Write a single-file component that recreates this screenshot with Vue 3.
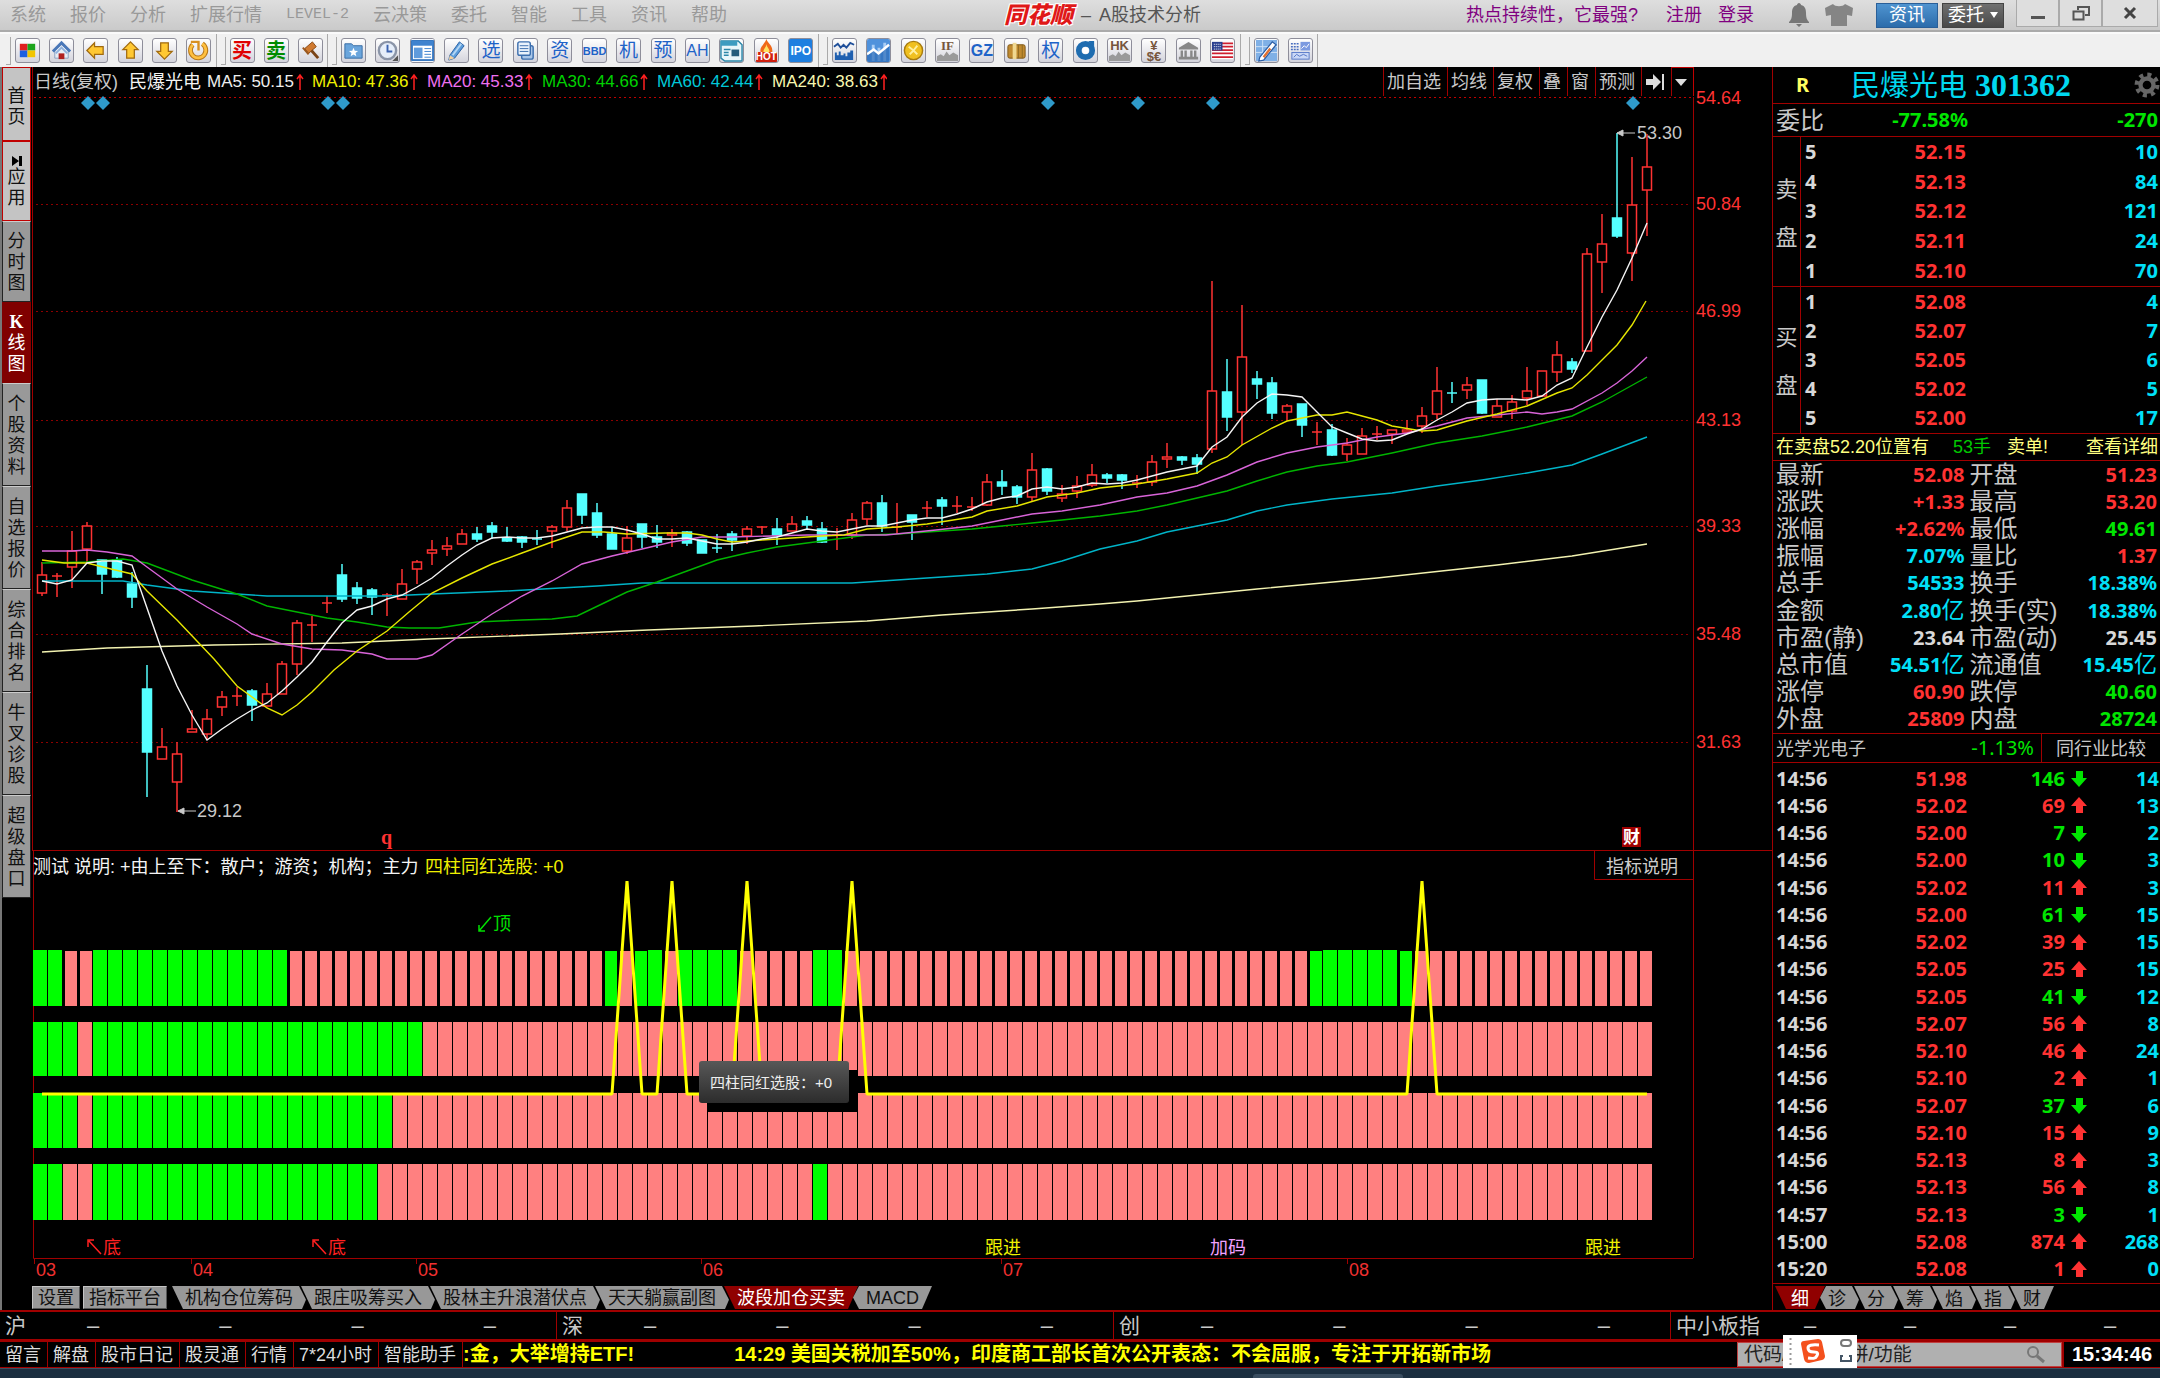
<script setup>
const menus = ['系统', '报价', '分析', '扩展行情', 'LEVEL-2', '云决策', '委托', '智能', '工具', '资讯', '帮助']

const art = {
  grid: '<rect x="4" y="5" width="8" height="7" fill="#e02020"/><rect x="12" y="5" width="8" height="7" fill="#1ca51c"/><rect x="4" y="12" width="8" height="7" fill="#1c5fe0"/><rect x="12" y="12" width="8" height="7" fill="#f2c500"/>',
  home: '<path d="M5 12v8h14v-8l-7-6z" fill="#e8edf5" stroke="#8aa0c0"/><path d="M3 13l9-9 9 9" fill="none" stroke="#4a78b8" stroke-width="3"/><path d="M6 15l6-6 6 6" fill="none" stroke="#8fb2dd" stroke-width="2"/><rect x="9" y="15" width="6" height="6" fill="#b02020"/>',
  left: '<path d="M3 12l8-8v4h9v8h-9v4z" fill="#ffc832" stroke="#a06a10" stroke-width="1.3"/>',
  up: '<path d="M12 3l8 8h-4v9H8v-9H4z" fill="#ffc832" stroke="#a06a10" stroke-width="1.3"/>',
  down: '<path d="M12 21l8-8h-4V4H8v9H4z" fill="#ffc832" stroke="#a06a10" stroke-width="1.3"/>',
  refresh: '<path d="M6 6a8 8 0 1 0 10-1" fill="none" stroke="#b87818" stroke-width="5"/><path d="M6 6a8 8 0 1 0 10-1" fill="none" stroke="#ffc040" stroke-width="3"/><path d="M4 3h8v9" fill="none" stroke="#d89020" stroke-width="2.500"/>',
  gavel: '<path d="M6 10l8-7 4 5-8 7z" fill="#d07a30" stroke="#8a4a15"/><path d="M13 12l7 8" stroke="#7a4418" stroke-width="3"/><path d="M4 9l6 7" stroke="#9a5820" stroke-width="2"/>',
  folder: '<path d="M3 5h7l2 2h9v13H3z" fill="#6aa5dc" stroke="#3a6ea5"/><path d="M12 9l1.3 3.2 3.5.2-2.700 2.200.9 3.400-3-1.900-3 1.900.9-3.400-2.700-2.200 3.500-.2z" fill="#fff"/>',
  clock: '<circle cx="12" cy="12" r="9" fill="#e6eefa" stroke="#8b95a8" stroke-width="2.500"/><path d="M12 6v7h5" fill="none" stroke="#3b62b0" stroke-width="2"/><path d="M17 23l6-6v6z" fill="#555"/>',
  news: '<rect width="24" height="24" fill="#fff"/><rect x="1" y="2" width="22" height="20" fill="#fff" stroke="#3878c0" stroke-width="2"/><rect x="1" y="2" width="22" height="5" fill="#3f83cf"/><rect x="3" y="9" width="9" height="11" fill="#5f9bdc"/><path d="M14 10h7M14 13h7M14 16h7M14 19h7" stroke="#3f83cf"/>',
  pencil: '<path d="M5 17L15 3l5 4L10 20l-6 2z" fill="#5c9ddb" stroke="#2b62a5"/><path d="M8 17L17 5" stroke="#b4d6f4" stroke-width="2"/><path d="M5 17l5 3-6 2z" fill="#f2d0a0"/>',
  pages: '<rect x="8" y="7" width="12" height="14" rx="2" fill="#a9c6e8" stroke="#3c6fae" stroke-width="1.500"/><rect x="4" y="3" width="13" height="14" rx="2" fill="#e9f2fc" stroke="#3c6fae" stroke-width="1.500"/><path d="M6 7h9M6 10h9M6 13h9" stroke="#3c6fae"/>',
  paper: '<path d="M1 2h18l4 4v17H5l-4-3z" fill="#e8f6fa" stroke="#2a86a8" stroke-width="1.500"/><path d="M1 2h17v5H1z" fill="#3d9cc0"/><path d="M4 11h7M4 14h5M4 17h5" stroke="#2a86a8" stroke-width="1.500"/><rect x="12" y="11" width="8" height="7" fill="#245d7c"/>',
  hot: '<path d="M12 0c1 5 7 6 6 14H6C4 8 10 6 12 0z" fill="#f06818"/><path d="M12 5c0 4 4 5 3 10H9c-1-5 3-6 3-10z" fill="#ffe060"/>',
  wave: '<path d="M1 8l4-3 3 4 3-3 3 3 4-5 4 2" fill="none" stroke="#1f4f9a" stroke-width="2"/><path d="M2 22v-8h2v3h2v-4h2v4h3v-2h2v3h2v-4h3v-2h3v10z" fill="#1f5fb0"/>',
  area: '<rect width="24" height="24" fill="#4f92dc"/><path d="M5 6h3v17H5zM11 9h3v14h-3zM17 4h3v19h-3z" fill="#a9cdf4"/><path d="M0 16l7-5 5 4L23 6v18H0z" fill="#2c6cb8" opacity=".7"/><path d="M0 16l7-5 5 4L23 6" fill="none" stroke="#fff" stroke-width="2.500"/>',
  coin: '<circle cx="12" cy="12" r="9.500" fill="#f0c020" stroke="#a87c10" stroke-width="1.500"/><path d="M7 8l5 4 4-5M12 12l4 4M8 16l4-4" stroke="#fff0a0" stroke-width="2" fill="none"/>',
  hill: '<path d="M1 23v-5l4-2 3 2 3-5 3 4 4-3 5 3v6z" fill="#9a9a9a"/>',
  chest: '<rect x="3" y="6" width="18" height="14" rx="2" fill="#c08a30" stroke="#7e5818"/><rect x="8" y="4" width="4" height="17" fill="#f0d890"/><path d="M14 6v14M18 6v14" stroke="#8e6820"/>',
  disc: '<circle cx="12" cy="12" r="7" fill="none" stroke="#1e6cb0" stroke-width="6"/><circle cx="12" cy="12" r="3.500" fill="#fff"/><path d="M15 2h6v6z" fill="#1e6cb0"/>',
  bank: '<path d="M2 9l10-6 10 6v2H2z" fill="#888"/><path d="M5 12v7M9 12v7M15 12v7M19 12v7" stroke="#888" stroke-width="2.500"/><path d="M2 20h20" stroke="#888" stroke-width="3"/>',
  flag: '<rect x="1" y="3" width="22" height="18" fill="#fff"/><path d="M1 4.500h22M1 8h22M1 11.500h22M1 15h22M1 19h22" stroke="#d02030" stroke-width="1.800"/><rect x="1" y="3" width="11" height="9" fill="#2a3f8f"/><path d="M3 5.500h8M3 8h8M3 10.500h8" stroke="#fff" stroke-dasharray="1 1"/>',
  draw: '<rect x="1" y="1" width="22" height="22" fill="#7fb0e6"/><path d="M1 14h22M1 8h22M8 1v22" stroke="#cfe2f8"/><path d="M5 19L18 3l4 3L9 22l-5 1z" fill="#fff" stroke="#2c5ea5" stroke-width="1.300"/><path d="M9 19l7-9" stroke="#e07030" stroke-width="2.500"/>',
  panel: '<path d="M2 5h8M2 8h8M2 11h8" stroke="#4a6fc0" stroke-dasharray="2 1" stroke-width="1.500"/><rect x="12" y="3" width="10" height="9" fill="#7c9ae0"/><path d="M13 10l3-3 2 2 3-4" stroke="#fff" fill="none"/><rect x="3" y="14" width="18" height="7" fill="#cbd8f6" stroke="#5577c8"/><path d="M5 19l3-3 3 2 4-2 4 2" stroke="#5577c8" fill="none"/>'
}
const toolGroups = [
  { n: 'g6', items: [{ a: 'grid' }, { a: 'home' }, { a: 'left' }, { a: 'up' }, { a: 'down' }, { a: 'refresh' }] },
  { n: 'g3', items: [{ t: '买', c: 'red' }, { t: '卖', c: 'green' }, { a: 'gavel' }] },
  { n: 'g14', items: [{ a: 'folder' }, { a: 'clock' }, { a: 'news' }, { a: 'pencil' }, { t: '选', c: 'blue' }, { a: 'pages' }, { t: '资', c: 'blue' }, { t: 'BBD', c: 'blue tiny' }, { t: '机', c: 'blue' }, { t: '预', c: 'blue' }, { t: 'AH', c: 'blue small' }, { a: 'paper' }, { a: 'hot', t: 'HOT', c: 'hot' }, { t: 'IPO', c: 'ipo' }] },
  { n: 'g12', items: [{ a: 'wave' }, { a: 'area' }, { a: 'coin' }, { a: 'hill', t: 'IF', c: 'over serif' }, { t: 'GZ', c: 'blue bold' }, { a: 'chest' }, { t: '权', c: 'blue' }, { a: 'disc' }, { a: 'hill', t: 'HK', c: 'over' }, { t: '¥ $€', c: 'money' }, { a: 'bank' }, { a: 'flag' }] },
  { n: 'g2', items: [{ a: 'draw' }, { a: 'panel' }] }
]

const sideTabs = [
  { t: '首页', c: 'light s1' }, { t: '应用', c: 'light s2', arrow: true }, { t: '分时图', c: 's3' },
  { t: 'K线图', c: 's3 active' }, { t: '个股资料', c: 's4' }, { t: '自选报价', c: 's4' },
  { t: '综合排名', c: 's4' }, { t: '牛叉诊股', c: 's4' }, { t: '超级盘口', c: 's4' }
]

const averages = [
  { t: 'MA5: 50.15', c: 'w' }, { t: 'MA10: 47.36', c: 'y' }, { t: 'MA20: 45.33', c: 'm' },
  { t: 'MA30: 44.66', c: 'g' }, { t: 'MA60: 42.44', c: 'b' }, { t: 'MA240: 38.63', c: 'k' }
]
const chartButtons = ['加自选', '均线', '复权', '叠', '窗', '预测']

const step = 15
const cx = (i) => 42 + i * step

// high, body top, body bottom, low; the last field is 1 for a rising day
const raw = `562,575,593,596,1 573,576,576,597,1 531,551,567,588,1 522,526,549,562,1 560,560,574,594,0 557,560,577,578,0 572,584,597,608,0 665,689,752,797,0 728,747,759,759,1 742,754,782,812,1
710,729,732,732,1 709,719,734,740,1 691,697,707,716,1 687,696,696,706,1 689,691,705,721,0 683,694,706,706,1 661,664,694,694,1 620,623,664,675,1 616,625,625,642,1 596,603,603,613,1
564,575,599,602,0 582,588,598,604,0 588,590,597,615,0 593,595,595,616,1 569,584,599,599,1 560,562,569,584,1 540,550,553,565,1 537,546,549,556,1 529,534,544,544,1 527,534,539,542,0
522,526,532,539,0 527,538,541,542,0 536,537,542,548,0 530,539,539,545,0 525,527,531,548,1 500,508,527,531,1 494,494,515,524,0 503,513,535,538,0 527,534,549,549,0 526,538,551,554,1
524,524,537,548,0 525,537,542,548,0 529,533,535,547,1 531,532,543,546,0 540,540,553,553,0 534,548,548,553,0 531,534,540,551,0 526,529,536,544,1 526,527,527,534,1 518,529,535,545,0
516,524,531,531,1 516,521,525,529,0 522,529,542,543,0 528,535,535,550,1 513,520,535,539,1 501,503,519,525,1 495,503,526,532,0 503,527,527,534,1 515,515,522,540,0 501,508,508,517,1
497,500,506,525,0 496,506,506,513,1 497,507,507,511,1 474,482,505,506,1 470,482,486,495,0 485,487,497,504,0 453,470,497,502,1 468,469,491,495,0 485,494,498,502,1 476,486,491,498,1
464,475,485,487,1 473,475,478,483,0 474,475,480,489,0 475,483,484,488,1 455,462,482,486,1 443,457,459,468,1 456,457,460,465,0 454,458,464,474,0 281,391,449,453,1 359,392,417,431,0
305,357,412,445,1 371,379,384,399,0 377,383,413,419,0 404,406,412,420,1 404,404,425,437,0 422,432,432,445,1 424,430,455,456,0 438,445,454,461,1 428,436,454,454,1 426,434,434,440,1
430,430,434,444,1 420,430,432,433,1 407,416,426,433,1 367,391,414,419,1 382,393,393,403,0 377,385,390,399,1 380,380,413,414,0 399,406,417,417,1 395,402,411,419,1 367,391,398,405,1
371,371,396,396,1 341,355,372,382,1 358,362,369,373,0 248,254,351,351,1 214,244,262,293,1 133,218,236,238,0 157,205,253,281,1 134,167,190,236,1`
const candles = raw.split(/\s+/).map((s, i) => {
  const [h, t, b, l, up] = s.split(',').map(Number)
  return { x: cx(i), h, t, b, l, up: up === 1, flat: b - t < 2 }
})

const ma5 = [581, 584, 580, 563, 561, 561, 565, 608, 651, 686, 715, 740, 729, 719, 710, 703, 691, 677, 662, 642, 623, 610, 606, 599, 595, 587, 578, 566, 555, 545, 538, 537, 538, 538, 536,
  532, 528, 527, 527, 530, 534, 539, 539, 538, 541, 544, 544, 542, 539, 537, 533, 529, 531, 532, 529, 526, 526, 523, 520, 518, 518, 514, 509, 502, 498, 496, 489, 487, 489, 487, 483,
  484, 483, 480, 476, 472, 469, 466, 447, 437, 417, 403, 394, 395, 397, 412, 427, 433, 439, 441, 440, 434, 429, 420, 412, 403, 400, 399, 399, 400, 396, 385, 378, 347, 317, 290, 258, 223]
const lines = [
  { c: '#f2f2b0', p: '42,652 107,648 214,645 342,643 429,639 560,634 648,630 754,626 867,621 942,615 1032,609 1100,604 1137,601 1257,589 1377,578 1497,565 1572,556 1647,544' },
  { c: '#00b4c8', p: '42,581 123,581 147,585 192,591 267,596 387,596 432,594 507,591 560,588 597,586 642,583 852,583 897,580 942,577 987,574 1032,569 1062,561 1100,549 1137,541 1167,532 1197,526 1227,520 1257,511 1287,505 1332,499 1392,493 1437,486 1482,480 1527,473 1572,465 1602,454 1647,437' },
  { c: '#00b400', p: '42,563 87,562 123,559 147,563 192,580 237,594 267,606 297,612 327,618 357,622 387,627 409,628 439,628 477,622 522,620 552,619 577,616 604,603 627,592 657,582 687,571 717,560 747,553 777,547 807,543 837,539 867,535 897,534 942,531 972,529 1002,526 1032,523 1062,520 1100,516 1137,511 1167,505 1197,498 1227,491 1257,481 1287,472 1317,466 1347,462 1392,453 1437,443 1482,436 1527,427 1572,416 1602,402 1647,377' },
  { c: '#d864d8', p: '42,551 72,551 87,550 107,552 132,556 147,567 177,589 207,607 237,624 252,634 282,644 312,649 342,650 372,654 387,659 417,659 432,655 462,634 492,614 522,596 552,581 582,564 612,556 642,549 672,542 702,537 732,537 807,535 886,535 936,530 972,526 1002,520 1032,514 1062,511 1100,505 1137,497 1167,493 1197,486 1227,475 1257,462 1287,453 1317,447 1347,443 1377,437 1407,433 1437,426 1467,418 1497,415 1527,412 1542,414 1557,412 1572,409 1602,393 1617,383 1632,371 1647,357' },
  { c: '#e6e600', p: '42,560 64,563 87,563 107,568 132,574 147,591 177,620 214,659 237,686 267,708 282,715 297,705 312,692 334,670 357,651 387,631 409,612 432,593 462,578 492,564 522,553 552,542 567,537 582,532 604,532 627,534 665,533 687,533 702,535 717,539 732,542 762,540 792,538 822,536 844,535 867,529 897,527 927,524 947,521 972,517 987,511 1017,506 1047,497 1077,493 1100,488 1137,484 1167,479 1197,473 1212,463 1227,457 1242,445 1272,428 1287,421 1317,415 1332,415 1347,412 1377,420 1392,426 1422,431 1437,430 1467,421 1497,414 1527,406 1557,393 1572,388 1587,375 1602,360 1617,345 1632,325 1646,301' },
  { c: '#f4f4f4', p: ma5.map((y, i) => `${cx(i)},${y}`).join(' ') }
]
const scale = [[98, '54.64'], [204, '50.84'], [311, '46.99'], [420, '43.13'], [526, '39.33'], [634, '35.48'], [742, '31.63']]
const diamonds = [88, 103, 328, 343, 1048, 1138, 1213, 1633]

// green runs per band, as inclusive index pairs
const bands = [
  { y: 951, h: 55, thin: true, green: [[0, 1], [4, 16], [38, 38], [40, 41], [43, 46], [52, 53], [85, 91]] },
  { y: 1022, h: 54, green: [[0, 2], [4, 25]] },
  { y: 1093, h: 55, green: [[0, 2], [4, 23]] },
  { y: 1164, h: 56, green: [[0, 1], [4, 22], [52, 52]] }
]
const narrowGreen = [38, 40, 85, 91]
const bars = bands.flatMap((b) =>
  Array.from({ length: 108 }, (_, i) => {
    const green = b.green.some(([s, e]) => i >= s && i <= e)
    const narrow = b.thin && (!green || narrowGreen.includes(i))
    return { key: `${b.y}-${i}`, x: 33 + i * step + (narrow ? 2 : 0), y: b.thin && !narrow ? b.y - 1 : b.y, w: narrow ? 12 : 14, h: b.thin && !narrow ? b.h + 1 : b.h, green }
  })
)
const peaks = [39, 42, 47, 54, 92]
const signal = ['42,1094', ...peaks.map((i) => `${cx(i) - 15},1094 ${cx(i)},881 ${cx(i) + 15},1094`), '1647,1094'].join(' ')
const months = [[34, '03'], [191, '04'], [416, '05'], [701, '06'], [1001, '07'], [1347, '08']]

const plotTabs = ['机构仓位筹码', '跟庄吸筹买入', '股林主升浪潜伏点', '天天躺赢副图', '波段加仓买卖', 'MACD']
const bookSides = [
  { side: '卖盘', rows: [[5, '52.15', 10], [4, '52.13', 84], [3, '52.12', 121], [2, '52.11', 24], [1, '52.10', 70]] },
  { side: '买盘', rows: [[1, '52.08', 4], [2, '52.07', 7], [3, '52.05', 6], [4, '52.02', 5], [5, '52.00', 17]] }
]
const details = [
  ['最新', '52.08', 'r', '开盘', '51.23', 'r'], ['涨跌', '+1.33', 'r', '最高', '53.20', 'r'],
  ['涨幅', '+2.62%', 'r', '最低', '49.61', 'g'], ['振幅', '7.07%', 'c', '量比', '1.37', 'r'],
  ['总手', '54533', 'c', '换手', '18.38%', 'c'], ['金额', '2.80亿', 'c', '换手(实)', '18.38%', 'c'],
  ['市盈(静)', '23.64', 'w', '市盈(动)', '25.45', 'w'], ['总市值', '54.51亿', 'c', '流通值', '15.45亿', 'c'],
  ['涨停', '60.90', 'r', '跌停', '40.60', 'g'], ['外盘', '25809', 'r', '内盘', '28724', 'g']
]
const amount = (v) => v.replace('亿', '')
const ticks = [
  ['14:56', '51.98', 146, 0, 14], ['14:56', '52.02', 69, 1, 13], ['14:56', '52.00', 7, 0, 2], ['14:56', '52.00', 10, 0, 3],
  ['14:56', '52.02', 11, 1, 3], ['14:56', '52.00', 61, 0, 15], ['14:56', '52.02', 39, 1, 15], ['14:56', '52.05', 25, 1, 15],
  ['14:56', '52.05', 41, 0, 12], ['14:56', '52.07', 56, 1, 8], ['14:56', '52.10', 46, 1, 24], ['14:56', '52.10', 2, 1, 1],
  ['14:56', '52.07', 37, 0, 6], ['14:56', '52.10', 15, 1, 9], ['14:56', '52.13', 8, 1, 3], ['14:56', '52.13', 56, 1, 8],
  ['14:57', '52.13', 3, 0, 1], ['15:00', '52.08', 874, 1, 268], ['15:20', '52.08', 1, 1, 0]
]
const panelTabs = ['细', '诊', '分', '筹', '焰', '指', '财']
const indices = ['沪', '深', '创', '中小板指']
const shortcuts = ['留言', '解盘', '股市日记', '股灵通', '行情', '7*24小时', '智能助手']
</script>

<template>
  <div class="app">
    <header class="titlebar">
      <nav class="menu">
        <button v-for="m in menus" :key="m" :class="{ latin: m === 'LEVEL-2' }">{{ m }}</button>
      </nav>
      <h1 class="title"><span class="logo">同花顺</span><span>–</span><span>A股技术分析</span></h1>
      <div class="account">
        <a href="#">热点持续性，它最强?</a>
        <a href="#">注册</a>
        <a href="#">登录</a>
      </div>
      <svg class="bell" viewBox="0 0 22 26" width="22" height="26"><path d="M11 1c1 0 2 1 2 2 4 1 5 4 5 8 0 5 1 7 3 9v1H1v-1c2-2 3-4 3-9 0-4 1-7 5-8 0-1 1-2 2-2zM8 22h6l-3 3z" fill="#777" /></svg>
      <svg class="shirt" viewBox="0 0 30 24" width="30" height="24"><path d="M9 1c2 3 10 3 12 0l8 4-1 8-5-1v11H7V12l-5 1-1-8z" fill="#858585" /></svg>
      <button class="pill blue-pill">资讯</button>
      <button class="pill dark-pill">委托<i></i></button>
      <div class="window-buttons">
        <button aria-label="最小化"><svg width="16" height="16"><path d="M1 11h14v3H1z" fill="#555" /></svg></button>
        <button aria-label="还原"><svg width="18" height="16"><path d="M6 5V2h11v8h-4M1.500 6.500h10v8h-10z" fill="none" stroke="#555" stroke-width="2" /></svg></button>
        <button aria-label="关闭"><svg width="16" height="14"><path d="M3 2l10 10M13 2L3 12" stroke="#444" stroke-width="3" /></svg></button>
      </div>
    </header>

    <div class="toolbar">
      <div v-for="g in toolGroups" :key="g.n" class="tools" :class="g.n">
        <button v-for="(b, k) in g.items" :key="k" :class="b.c" :aria-label="b.t || b.a">
          <svg v-if="b.a" viewBox="0 0 24 24" v-html="art[b.a]"></svg>
          <span v-if="b.t">{{ b.t }}</span>
        </button>
      </div>
    </div>

    <main class="main">
      <nav class="side">
        <button v-for="s in sideTabs" :key="s.t" :class="s.c">
          <svg v-if="s.arrow" width="12" height="12"><path d="M1 1l7 5-7 5zM8 1h3v10H8z" /></svg>
          <span v-for="ch in s.t" :key="ch" :class="{ k: ch === 'K' }">{{ ch }}</span>
        </button>
      </nav>

      <section class="center">
        <div class="info">
          <span class="dim">日线(复权)</span>
          <span class="name">民爆光电</span>
          <span v-for="a in averages" :key="a.t" class="ma" :class="a.c">{{ a.t }}<svg width="8" height="20"><path d="M4 18V3M1 7l3-4 3 4" fill="none" stroke="#ff2020" stroke-width="1.500" /></svg></span>
          <div class="chart-buttons">
            <button v-for="b in chartButtons" :key="b">{{ b }}</button>
            <button aria-label="右移"><svg width="20" height="18"><path d="M1 6h7V1l8 8-8 8v-5H1zM17 1h2v16h-2z" fill="#ddd" /></svg></button>
            <button aria-label="更多"><svg width="12" height="8"><path d="M0 1h12L6 8z" fill="#ddd" /></svg></button>
          </div>
        </div>

        <svg class="plot" viewBox="32 97 1740 753">
          <g stroke="#8c0000" stroke-dasharray="2 3">
            <path d="M34 97.500H1693" stroke="#c00000" />
            <path v-for="s in scale.slice(1)" :key="s[0]" :d="`M36 ${s[0]}.500H1690`" />
          </g>
          <path d="M32.500 97V850M1693.500 97V850" stroke="#a00000" />
          <g fill="#ff3232" class="num"><text v-for="s in scale" :key="s[1]" x="1696" :y="s[0] + 6">{{ s[1] }}</text></g>
          <path v-for="d in diamonds" :key="d" :d="`M${d} 96l7 7-7 7-7-7z`" fill="#2f9aca" />
          <g v-for="c in candles" :key="c.x" :stroke="c.up ? '#ff3232' : '#54ffff'" :fill="c.up ? '#000' : '#54ffff'" stroke-width="1.500">
            <path v-if="c.h < c.t" :d="`M${c.x} ${c.h}V${c.t}`" />
            <path v-if="c.b < c.l" :d="`M${c.x} ${c.b}V${c.l}`" />
            <path v-if="c.flat" :d="`M${c.x - 5} ${c.t}H${c.x + 5}`" />
            <rect v-else :x="c.x - 4.500" :y="c.t" width="9" :height="c.b - c.t" />
          </g>
          <polyline v-for="l in lines" :key="l.c" :points="l.p" :stroke="l.c" fill="none" stroke-width="1.400" />
          <g stroke="#c8c8c8" fill="#c8c8c8"><path d="M178 811h18M178 811l6-3v6zM1617 133h18M1617 133l6-3v6z" /></g>
          <g class="num" fill="#c8c8c8"><text x="197" y="817">29.12</text><text x="1637" y="139">53.30</text></g>
          <text x="381" y="844" class="q">q</text>
          <rect x="1622" y="827" width="19" height="20" fill="#a00000" />
          <text x="1623" y="843" class="badge">财</text>
        </svg>

        <svg class="plot" viewBox="32 850 1740 434">
          <path d="M32 850.500H1772M1594.500 850V879.500H1693M1693.500 850V1258M33.500 850V1258.500H1693" stroke="#a00000" fill="none" />
          <text x="33" y="873" class="cjk" fill="#f4f4f4">测试 说明: +由上至下：散户；游资；机构；主力</text>
          <text x="425" y="873" class="cjk" fill="#f0f000">四柱同红选股: +0</text>
          <text x="1606" y="873" class="cjk" fill="#ccc">指标说明</text>
          <rect v-for="b in bars" :key="b.key" :x="b.x" :y="b.y" :width="b.w" :height="b.h" :fill="b.green ? '#00ff00' : '#ff8080'" />
          <polyline :points="signal" fill="none" stroke="#ffff00" stroke-width="3" stroke-linejoin="bevel" />
          <g fill="none" stroke-width="1.500">
            <path d="M491 917l-12 14M479 925v6h6" stroke="#00e000" />
            <path d="M101 1254l-12-13M88 1247v-7h6M326 1254l-12-13M313 1247v-7h6" stroke="#ff2020" />
          </g>
          <g class="cjk">
            <text x="493" y="930" fill="#00e000">顶</text>
            <g fill="#ff2020"><text x="103" y="1254">底</text><text x="328" y="1254">底</text></g>
            <text x="985" y="1254" fill="#f0f000">跟进</text>
            <text x="1210" y="1254" fill="#f0a0ff">加码</text>
            <text x="1585" y="1254" fill="#f0f000">跟进</text>
          </g>
          <g class="num" fill="#f03030">
            <template v-for="m in months" :key="m[1]"><path :d="`M${m[0]}.500 1258v6`" stroke="#a00000" /><text :x="m[0] + 2" y="1276">{{ m[1] }}</text></template>
          </g>
          <linearGradient id="tip" x2="0" y2="1"><stop stop-color="#585858" /><stop offset="1" stop-color="#2c2c2c" /></linearGradient>
          <rect x="708" y="1070" width="149" height="42" />
          <rect x="699" y="1061" width="150" height="42" rx="3" fill="url(#tip)" />
          <text x="710" y="1088" class="tip">四柱同红选股：+0</text>
        </svg>

        <div class="plot-tabs">
          <button class="plain">设置</button>
          <button class="plain">指标平台</button>
          <div class="tabset">
            <button v-for="t in plotTabs" :key="t" :class="{ active: t === '波段加仓买卖', last: t === 'MACD' }">{{ t }}</button>
          </div>
        </div>
      </section>

      <aside class="panel">
        <div class="stock">
          <b class="flag">R</b>
          <h2><span>民爆光电</span> 301362</h2>
          <svg viewBox="0 0 24 24" width="26" height="26"><g fill="none" stroke="#666"><circle cx="12" cy="12" r="6" stroke-width="4" /><circle cx="12" cy="12" r="9.500" stroke-width="4" stroke-dasharray="3.700 3.760" /></g></svg>
        </div>
        <div class="ratio"><span>委比</span><b>-77.58%</b><b>-270</b></div>
        <div v-for="s in bookSides" :key="s.side" class="book">
          <div class="book-side"><span v-for="ch in s.side" :key="ch">{{ ch }}</span></div>
          <table>
            <tbody><tr v-for="r in s.rows" :key="r[0]"><td class="lv">{{ r[0] }}</td><td class="r">{{ r[1] }}</td><td class="c">{{ r[2] }}</td></tr></tbody>
          </table>
        </div>
        <div class="notice"><span>在卖盘52.20位置有</span><span class="g">53手</span><span>卖单!</span><a href="#">查看详细</a></div>
        <table class="details">
          <tbody>
            <tr v-for="d in details" :key="d[0]">
              <th>{{ d[0] }}</th>
              <td :class="d[2]">{{ amount(d[1]) }}<span v-if="d[1].endsWith('亿')">亿</span></td>
              <th>{{ d[3] }}</th>
              <td :class="d[5]">{{ amount(d[4]) }}<span v-if="d[4].endsWith('亿')">亿</span></td>
            </tr>
          </tbody>
        </table>
        <div class="industry"><span>光学光电子</span><span class="g">-1.13%</span><button>同行业比较</button></div>
        <div class="ticks">
          <table>
            <tbody>
              <tr v-for="(t, k) in ticks" :key="k">
                <td class="w time">{{ t[0] }}</td><td class="r">{{ t[1] }}</td><td :class="t[3] ? 'r' : 'g'">{{ t[2] }}</td>
                <td class="dir"><svg width="17" height="17"><path :d="t[3] ? 'M8 0l8 9h-4v7H5V9H0z' : 'M8 17l8-9h-4V1H5v7H0z'" :fill="t[3] ? '#ff3232' : '#00e600'" /></svg></td>
                <td class="c">{{ t[4] }}</td>
              </tr>
            </tbody>
          </table>
        </div>
        <div class="tabset panel-tabs">
          <button v-for="(t, k) in panelTabs" :key="t" :class="{ active: k === 0, last: k === 6 }">{{ t }}</button>
        </div>
      </aside>
    </main>

    <div class="indices">
      <div v-for="n in indices" :key="n"><span class="label">{{ n }}</span><span v-for="k in 4" :key="k" class="dash">–</span></div>
    </div>

    <footer class="status">
      <button v-for="s in shortcuts" :key="s">{{ s }}</button>
      <p class="ticker"><span>:金，大举增持ETF!</span><span>14:29 美国关税加至50%，印度商工部长首次公开表态：不会屈服，专注于开拓新市场</span></p>
      <div class="search">
        <input aria-label="代码搜索" placeholder="代码/名称/简拼/功能" />
        <svg width="20" height="20"><circle cx="7" cy="7" r="5" fill="none" stroke="#777" stroke-width="2" /><path d="M11 11l7 6" stroke="#777" stroke-width="3" /></svg>
        <div class="ime">
          <svg width="74" height="33"><path d="M7.500 3v28" stroke="#999" stroke-width="2" stroke-dasharray="2 3" /><path d="M18 9q0-3 3-3l14-2q3 0 4 3l3 14q0 3-3 4l-13 3q-4 0-5-4z" fill="#f4511e" /><path d="M36 10q-11-1-11 3t6 4 2 5q-1 2-8 1" fill="none" stroke="#fff" stroke-width="3" /><rect x="58" y="5" width="10" height="6" rx="3" fill="none" stroke="#777" stroke-width="2" /><path d="M60 21h-2v5h10v-5h-2" fill="none" stroke="#456" stroke-width="2" /></svg>
        </div>
      </div>
      <time>15:34:46</time>
    </footer>
    <div class="taskbar"><i></i></div>
  </div>
</template>

<style>
body { margin: 0; background: #000; }
</style>

<style scoped>
.app { font: 18px/22px "Liberation Sans", "Noto Sans CJK SC", sans-serif; color: #c8c8c8; background: #000; }
.app *, .app { box-sizing: border-box; }
button { font: inherit; color: inherit; background: none; border: 0; padding: 0; margin: 0; }
a { color: inherit; text-decoration: none; }
table { border-collapse: collapse; border-spacing: 0; }
td, th { padding: 0; font-weight: normal; }
svg { display: block; }

.titlebar { height: 32px; display: flex; align-items: center; background: linear-gradient(#dedede, #cacaca); border-bottom: 2px solid #aaa; padding: 0 2px 0 10px; }
.menu { display: flex; gap: 24px; color: #999; margin-right: 12px; }
.menu .latin { font-family: "Liberation Mono", monospace; font-size: 15px; }
.title { display: flex; gap: 8px; margin: 0 auto; font-size: 18px; font-weight: 400; color: #555; align-items: center; }
.logo { font-size: 23px; font-weight: 900; font-style: italic; color: #e01818; text-shadow: 1px 1px #fff, -1px -1px #fff, 1px -1px #fff, -1px 1px #fff; }
.account { display: flex; gap: 16px; color: #800080; }
.account a:first-child { margin-right: 12px; }
.bell { margin-left: 34px; }
.shirt { margin: 0 22px 0 14px; }
.pill { width: 62px; height: 25px; color: #fff; margin-right: 4px; }
.blue-pill { background: linear-gradient(#4f94d0, #2c6cab); border: 1px solid #2a5f98; }
.dark-pill { background: linear-gradient(#707070, #484848); border: 1px solid #444; margin-right: 12px; display: flex; align-items: center; justify-content: center; gap: 6px; }
.dark-pill i { border: 4px solid transparent; border-top: 6px solid #fff; border-bottom: 0; }
.window-buttons { display: flex; height: 27px; align-self: flex-start; }
.window-buttons button { width: 43px; border: 1px solid #aaa; border-top: 0; background: #dedede; display: grid; place-items: center; }
.window-buttons button:last-child { width: 56px; }

.toolbar { height: 35px; background: #f0f0f0; display: flex; gap: 8px; padding-left: 10px; border-top: 2px solid #fafafa; }
.tools { display: grid; grid-auto-flow: column; grid-auto-columns: 1fr; place-items: center; border-right: 1px solid #aaa; position: relative; }
.tools::before { content: ""; position: absolute; left: -4px; top: 3px; bottom: 2px; width: 4px; border: solid #aaa; border-width: 0 1px 1px 0; }
.g6 { width: 207px; } .g3 { width: 103px; } .g14 { width: 483px; } .g12 { width: 414px; } .g2 { width: 69px; }
.tools button { width: 25px; height: 25px; border: 1px solid #8e8e9a; border-radius: 3px; background: linear-gradient(#fff, #d4d4dc); display: grid; place-items: center; overflow: hidden; }
.tools button > * { grid-area: 1 / 1; }
.tools svg { width: 23px; height: 23px; }
.tools .red { color: #e00000; font-weight: 700; font-size: 20px; }
.tools .green { color: #008c00; font-weight: 700; font-size: 20px; }
.tools .blue { color: #1e63c8; font-size: 19px; }
.tools .tiny { font-size: 11px; font-weight: 700; }
.tools .small { font-size: 16px; }
.tools .bold { font-size: 16px; font-weight: 700; }
.tools .hot span { color: #fff; background: #d02010; font-size: 10px; line-height: 10px; font-weight: 700; align-self: end; }
.tools .ipo { background: #1e7fe0; color: #fff; font-size: 12px; font-weight: 700; }
.tools .over span { color: #77563c; font-size: 13px; line-height: 14px; font-weight: 700; align-self: start; }
.tools .serif span { font-family: "Liberation Serif", serif; }
.tools .money span { color: #77563c; font-size: 13px; line-height: 11px; font-weight: 700; width: 18px; }

.main { display: flex; }
.side { flex: 0 0 32px; padding-right: 1px; border-left: 2px solid #777; }
.side button { display: flex; flex-direction: column; align-items: center; justify-content: center; width: 29px; background: #999; color: #111; border: 1px solid #222; border-top-color: #ccc; line-height: 21px; padding-top: 2px; }
.side .light { background: #c4c4c4; border: 1px solid #c00000; }
.side .active { background: #800000; color: #fff; border-color: #800000; }
.side .k { font-family: "Liberation Serif", serif; font-weight: 700; }
.side .s1 { height: 74px; padding-top: 6px; }
.side .s2 { height: 80px; }
.side .s3 { height: 81px; }
.side .s4 { height: 103px; }

.center { flex: 1; min-width: 0; }
.info { height: 30px; display: flex; align-items: center; border-left: 1px solid #a00000; padding: 0 78px 0 1px; font-size: 17px; white-space: nowrap; }
.dim { font-size: 18px; margin-right: 11px; }
.name { font-size: 18px; color: #f4f4f4; margin-right: 6px; }
.ma { display: flex; width: 115px; align-items: center; }
.ma svg { margin-left: 2px; }
.ma.w { width: 105px; color: #eee; } .ma.y { color: #f0f000; } .ma.m { color: #f070f0; } .ma.g { color: #00d000; } .ma.b { color: #00c8d8; } .ma.k { color: #f8f8b0; }
.chart-buttons { display: flex; margin-left: auto; align-self: stretch; font-size: 18px; }
.chart-buttons button { border-left: 1px solid #a00000; padding: 0 6px 0 3px; height: 29px; display: flex; align-items: center; }
.chart-buttons button:last-child { border-right: 1px solid #c00000; border-top: 1px solid #c00000; }
.plot { width: 100%; height: auto; overflow: visible; }
.num { font-size: 18px; }
.cjk { font-size: 18px; }
.q { font: bold 20px "Liberation Serif", serif; fill: #ff3232; }
.badge { font-size: 17px; font-weight: 700; fill: #fff; }
.tip { font-size: 15px; fill: #eee; }

.plot-tabs { display: flex; height: 26px; padding-top: 2px; gap: 3px; color: #111; }
.plain { background: #989898; height: 23px; padding: 0 5px; border: 1px solid #c4c4c4; border-right-color: #555; border-bottom-color: #555; }
.tabset { display: flex; color: #111; margin-left: 2px; }
.tabset button { height: 23px; background: #989898; padding: 0 13px; margin-right: -5px; white-space: nowrap; clip-path: polygon(0 0, calc(100% - 7px) 0, 100% 60%, calc(100% - 4px) 100%, 11px 100%); }
.tabset .active { background: #900000; color: #fff; clip-path: polygon(0 0, 100% 0, calc(100% - 10px) 100%, 11px 100%); }
.tabset .active + button { clip-path: polygon(6px 0, calc(100% - 7px) 0, 100% 60%, calc(100% - 4px) 100%, 6px 100%, 0 50%); }
.tabset .last { clip-path: polygon(0 0, 100% 0, calc(100% - 10px) 100%, 11px 100%); }
.tabset .active + .last { clip-path: polygon(6px 0, 100% 0, calc(100% - 10px) 100%, 6px 100%, 0 50%); }

.panel { flex: 0 0 388px; border-left: 1px solid #a00000; font-size: 20px; font-family: "Noto Sans", "Noto Sans CJK SC", sans-serif; display: flex; flex-direction: column; }
.panel b, .panel td { font-weight: 700; }
.stock { height: 36px; display: flex; align-items: center; padding-left: 23px; }
.flag { color: #ffff60; width: 55px; }
.stock h2 { margin: 0; font: bold 32px/34px "Liberation Serif", "Noto Sans CJK SC", serif; color: #00d8f0; }
.stock h2 span { font-size: 29px; font-weight: 400; }
.stock svg { margin-left: auto; }
.ratio { height: 33px; border-top: 1px solid #a00000; display: grid; grid-template-columns: 100px 92px 1fr; align-items: center; padding: 0 2px 0 3px; color: #00e600; text-align: right; }
.ratio span { font-size: 24px; color: #c8c8c8; text-align: left; }
.book { display: flex; height: 150px; border-top: 1px solid #a00000; }
.book + .book { height: 147px; }
.book-side { flex: 0 0 28px; border-right: 1px solid #a00000; display: flex; flex-direction: column; align-items: center; justify-content: center; gap: 26px; font-size: 22px; }
.book table { flex: 1; height: 100%; table-layout: fixed; }
.book td { text-align: right; padding-right: 2px; line-height: 24px; }
.book td.lv { width: 24px; text-align: left; padding-left: 4px; color: #d8d8d8; }
.book td.r { width: 143px; }
.r { color: #ff3232; } .g { color: #00e600; } .c { color: #00e0f8; } .w { color: #d8d8d8; }
.notice { height: 28px; border: solid #a00000; border-width: 1px 0; display: flex; align-items: center; padding: 0 2px 0 3px; font-size: 18px; color: #ffff80; font-family: "Liberation Sans", "Noto Sans CJK SC", sans-serif; }
.notice .g { color: #00c800; margin: 0 16px 0 24px; }
.notice a { margin-left: auto; }
.details { height: 272px; width: 100%; table-layout: fixed; }
.details th { font-family: "Liberation Sans", "Noto Sans CJK SC", sans-serif; font-size: 24px; text-align: left; padding-left: 3px; white-space: nowrap; line-height: 26px; width: 96px; }
.details td { text-align: right; line-height: 26px; padding-right: 2px; }
.details td:last-child { padding-right: 3px; }
.details td span { font-family: "Liberation Sans", "Noto Sans CJK SC", sans-serif; font-size: 23px; font-weight: 400; line-height: 20px; }
.industry { height: 30px; border: solid #a00000; border-width: 1px 0; display: flex; align-items: stretch; line-height: 28px; padding-left: 3px; font-size: 18px; }
.industry .g { margin-left: auto; margin-right: 7px; font-size: 20px; }
.industry button { width: 119px; border-left: 1px solid #a00000; }
.ticks { height: 521px; padding-top: 2px; border-bottom: 1px solid #a00000; }
.ticks table { width: 100%; height: 518px; table-layout: fixed; }
.ticks td { text-align: right; line-height: 24px; }
.ticks td.time { text-align: left; padding-left: 3px; width: 100px; }
.ticks td:nth-child(2) { width: 94px; }
.ticks td:nth-child(3) { width: 98px; }
.ticks td.dir { width: 25px; padding-left: 6px; }
.ticks td.c { padding-right: 1px; }
.panel-tabs { padding-top: 2px; font-size: 18px; }
.panel-tabs button.active { padding: 0 16px; }
.panel-tabs .active + button { padding-left: 8px; }

.indices { display: grid; grid-template-columns: 556fr 557fr 557fr 490fr; height: 29px; border-top: 2px solid #a00000; }
.indices div { display: flex; align-items: center; padding-left: 5px; border-left: 1px solid #a00000; }
.indices div:first-child { border-left: 0; }
.label { font-size: 21px; min-width: 22px; }
.dash { flex: 1; text-align: center; font-size: 22px; }

.status { display: flex; height: 29px; border: solid #a00000; border-width: 3px 0 1px; font-size: 18px; }
.status > button { padding: 0 6px 0 5px; border-right: 1px solid #a00000; white-space: nowrap; color: #ddd; }
.ticker { flex: 1; margin: 0; display: flex; gap: 100px; color: #ffff00; font-size: 20px; font-weight: 700; line-height: 25px; white-space: nowrap; overflow: hidden; }
.search { flex: 0 0 325px; position: relative; background: #b0b0b0; display: flex; align-items: center; border: 1px solid #c04040; padding: 0 15px 0 6px; }
.search input { flex: 1; min-width: 0; border: 0; padding: 0; background: none; font: inherit; font-size: 19px; color: #222; outline: 0; }
.search input::placeholder { color: #222; opacity: 1; }
.ime { position: absolute; left: 45px; top: -8px; background: #fff; }
.status time { flex: 0 0 98px; color: #fff; font-size: 20px; font-weight: 700; text-align: center; line-height: 25px; border-left: 2px solid #a00000; }
.taskbar { height: 10px; background: #1b2e40; border-top: 1px solid #3c5060; padding-top: 5px; }
.taskbar i { display: block; width: 150px; height: 4px; margin: 0 0 0 58%; background: #3a4d60; border-radius: 3px 3px 0 0; }
</style>
